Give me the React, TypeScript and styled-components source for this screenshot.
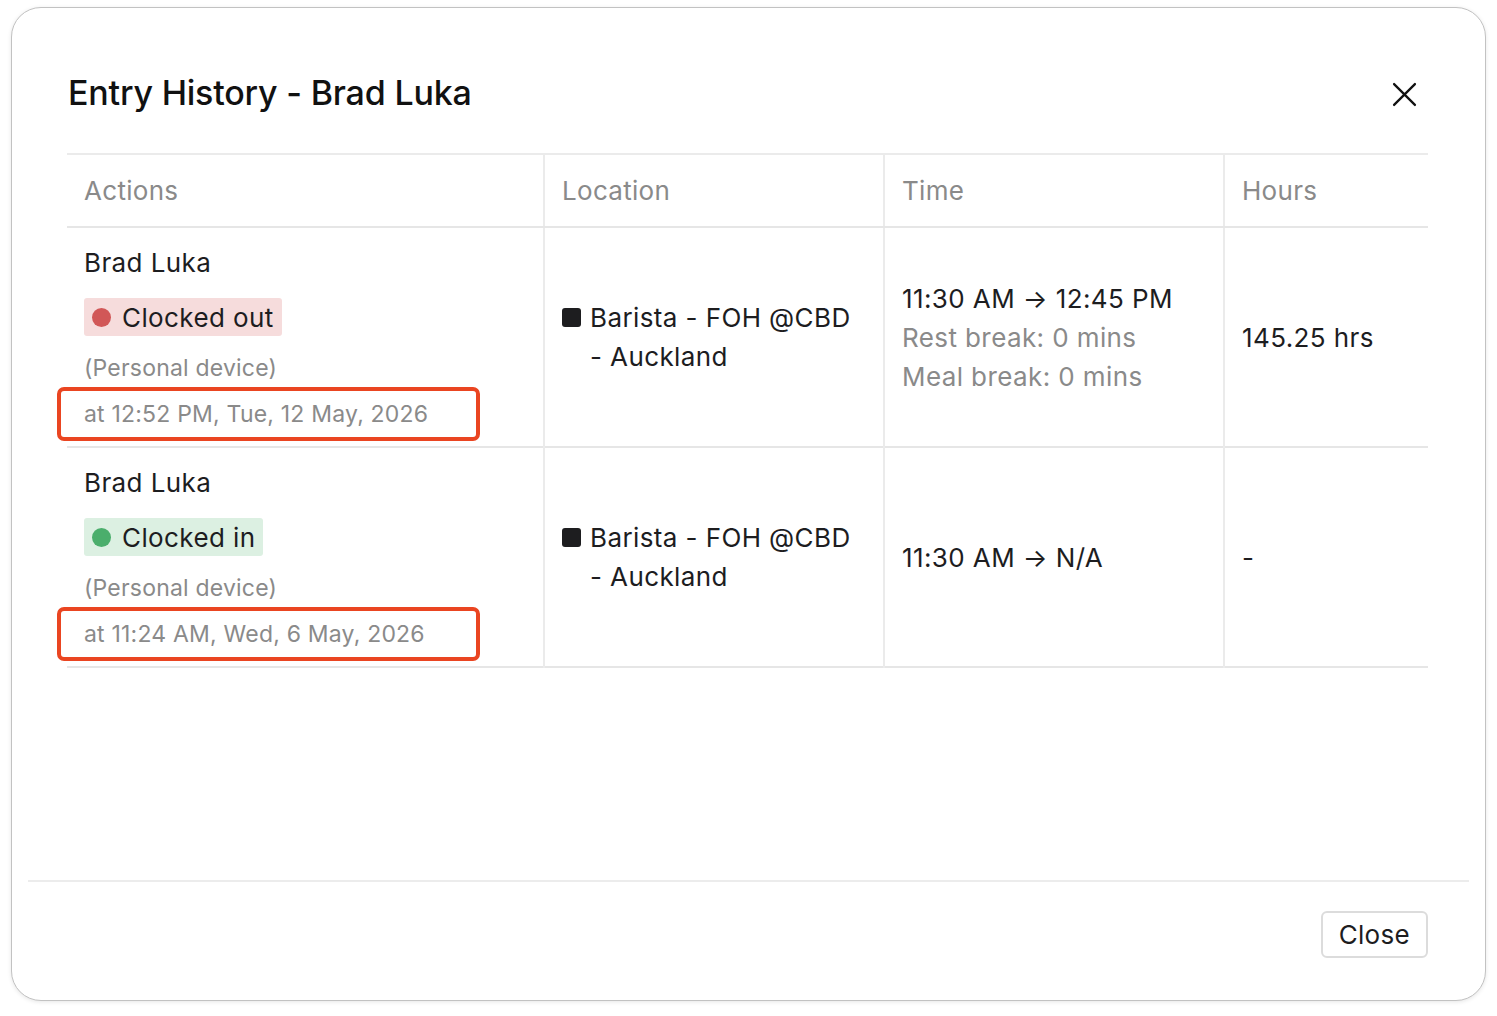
import React from 'react'
import styled, { createGlobalStyle } from 'styled-components'

const GlobalStyle = createGlobalStyle`
  html, body {
    margin: 0;
    padding: 0;
    background: #ffffff;
  }
  body {
    font-family: Inter, "Noto Sans", "Liberation Sans", sans-serif;
    color: #1d1d1f;
  }
`

const Page = styled.div`
  box-sizing: border-box;
  width: 1497px;
  height: 1016px;
  padding: 7px 11px 16px 11px;
`

const Modal = styled.div`
  box-sizing: border-box;
  height: 994px;
  border: 1px solid #c2c2c2;
  border-radius: 30px;
  background: #fff;
  box-shadow: 0 1px 4px rgba(0, 0, 0, 0.1);
  display: flex;
  flex-direction: column;
`

const Header = styled.div`
  box-sizing: border-box;
  height: 145px;
  padding: 63px 66px 0 56px;
  display: flex;
  align-items: flex-start;
  justify-content: space-between;
`

const Title = styled.h2`
  margin: 0;
  font-size: 34px;
  font-weight: 500;
  line-height: 44px;
  letter-spacing: -0.2px;
  color: #111;
`

const CloseIcon = styled.button`
  border: 0;
  background: none;
  padding: 0;
  width: 30px;
  height: 30px;
  margin-top: 8px;
  display: flex;
  align-items: center;
  justify-content: center;
  color: #111;
  cursor: pointer;
`

const Body = styled.div`
  flex: 1;
  padding: 0 57px 0 55px;
`

const Table = styled.table`
  width: 100%;
  border-collapse: collapse;
  table-layout: fixed;
`

const HeadCell = styled.th<{ $w: number }>`
  box-sizing: border-box;
  width: ${p => p.$w}px;
  height: 73px;
  padding: 0 17px;
  text-align: left;
  font-size: 26px;
  font-weight: 400;
  letter-spacing: 0.3px;
  color: #8a8a8a;
  border-top: 2px solid #ebebeb;
  border-bottom: 2px solid #e6e6e6;
  & + & {
    border-left: 2px solid #ebebeb;
  }
`

const Row = styled.tr`
  border-bottom: 2px solid #e6e6e6;
`

const Cell = styled.td`
  box-sizing: border-box;
  padding: 0 17px;
  vertical-align: middle;
  font-size: 26px;
  letter-spacing: 0.4px;
  line-height: 39px;
  color: #1d1d1f;
  & + & {
    border-left: 2px solid #ebebeb;
  }
`

const ActionCell = styled(Cell)`
  padding-top: 17px;
  padding-bottom: 16px;
`

const ActionStack = styled.div`
  display: flex;
  flex-direction: column;
  align-items: flex-start;
`

const Name = styled.div`
  line-height: 36px;
`

const Badge = styled.span<{ $tone: 'in' | 'out' }>`
  display: inline-flex;
  align-items: center;
  gap: 11px;
  height: 38px;
  margin-top: 17px;
  padding: 0 8px 0 8px;
  border-radius: 3px;
  background: ${p => (p.$tone === 'out' ? '#f6dcdc' : '#dcf0e2')};
  &::before {
    content: '';
    width: 19px;
    height: 19px;
    border-radius: 50%;
    background: ${p => (p.$tone === 'out' ? '#d15757' : '#4bae6c')};
  }
`

const Device = styled.div`
  margin-top: 16px;
  line-height: 32px;
  font-size: 23px;
  letter-spacing: 0.2px;
  color: #8a8a8a;
`

/* the stamp line carries an orange highlight frame */
const Stamp = styled.div`
  position: relative;
  margin-top: 14px;
  line-height: 32px;
  font-size: 23px;
  letter-spacing: 0.2px;
  color: #8a8a8a;
  &::after {
    content: '';
    position: absolute;
    left: -27px;
    top: -11px;
    width: 423px;
    height: 54px;
    box-sizing: border-box;
    border: 4px solid #ea4521;
    border-radius: 7px;
    pointer-events: none;
  }
`

const Place = styled.div`
  display: flex;
  gap: 9px;
`

const Swatch = styled.span`
  flex: none;
  width: 19px;
  height: 19px;
  border-radius: 3px;
  background: #1d1d1f;
  margin-top: 10px;
`

const Muted = styled.div`
  color: #8a8a8a;
`

const Footer = styled.div`
  box-sizing: border-box;
  height: 120px;
  margin: 0 16px;
  padding: 29px 41px 0 0;
  border-top: 2px solid #ececec;
  display: flex;
  justify-content: flex-end;
  align-items: flex-start;
`

const Button = styled.button`
  height: 47px;
  padding: 0 16px;
  border: 2px solid #dcdcdc;
  border-radius: 6px;
  background: #fff;
  font-family: inherit;
  font-size: 26px;
  letter-spacing: 0.3px;
  color: #1d1d1f;
  cursor: pointer;
`

type Entry = {
  status: 'in' | 'out'
  label: string
  stamp: string
  from: string
  to: string
  breaks?: { rest: string; meal: string }
  hours: string
}

const entries: Entry[] = [
  {
    status: 'out',
    label: 'Clocked out',
    stamp: 'at 12:52 PM, Tue, 12 May, 2026',
    from: '11:30 AM',
    to: '12:45 PM',
    breaks: { rest: '0 mins', meal: '0 mins' },
    hours: '145.25 hrs',
  },
  {
    status: 'in',
    label: 'Clocked in',
    stamp: 'at 11:24 AM, Wed, 6 May, 2026',
    from: '11:30 AM',
    to: 'N/A',
    hours: '-',
  },
]

const columns = [
  { title: 'Actions', width: 477 },
  { title: 'Location', width: 340 },
  { title: 'Time', width: 340 },
  { title: 'Hours', width: 204 },
]

const App = () => {
  return (
    <Page>
      <GlobalStyle />
      <Modal>
        <Header>
          <Title>Entry History - Brad Luka</Title>
          <CloseIcon aria-label="Close">
            <svg width="25" height="25" viewBox="0 0 24 24" fill="none" stroke="currentColor" strokeWidth="2.2" strokeLinecap="round">
              <path d="M2 2 L22 22 M22 2 L2 22" />
            </svg>
          </CloseIcon>
        </Header>
        <Body>
          <Table>
            <thead>
              <tr>
                {columns.map(c => (
                  <HeadCell key={c.title} $w={c.width}>{c.title}</HeadCell>
                ))}
              </tr>
            </thead>
            <tbody>
              {entries.map(e => (
                <Row key={e.stamp}>
                  <ActionCell>
                    <ActionStack>
                      <Name>Brad Luka</Name>
                      <Badge $tone={e.status}>{e.label}</Badge>
                      <Device>(Personal device)</Device>
                      <Stamp>{e.stamp}</Stamp>
                    </ActionStack>
                  </ActionCell>
                  <Cell>
                    <Place>
                      <Swatch />
                      <div>Barista - FOH @CBD<br />- Auckland</div>
                    </Place>
                  </Cell>
                  <Cell>
                    <div>{e.from} → {e.to}</div>
                    {e.breaks && (
                      <>
                        <Muted>Rest break: {e.breaks.rest}</Muted>
                        <Muted>Meal break: {e.breaks.meal}</Muted>
                      </>
                    )}
                  </Cell>
                  <Cell>{e.hours}</Cell>
                </Row>
              ))}
            </tbody>
          </Table>
        </Body>
        <Footer>
          <Button>Close</Button>
        </Footer>
      </Modal>
    </Page>
  )
}

export default App
